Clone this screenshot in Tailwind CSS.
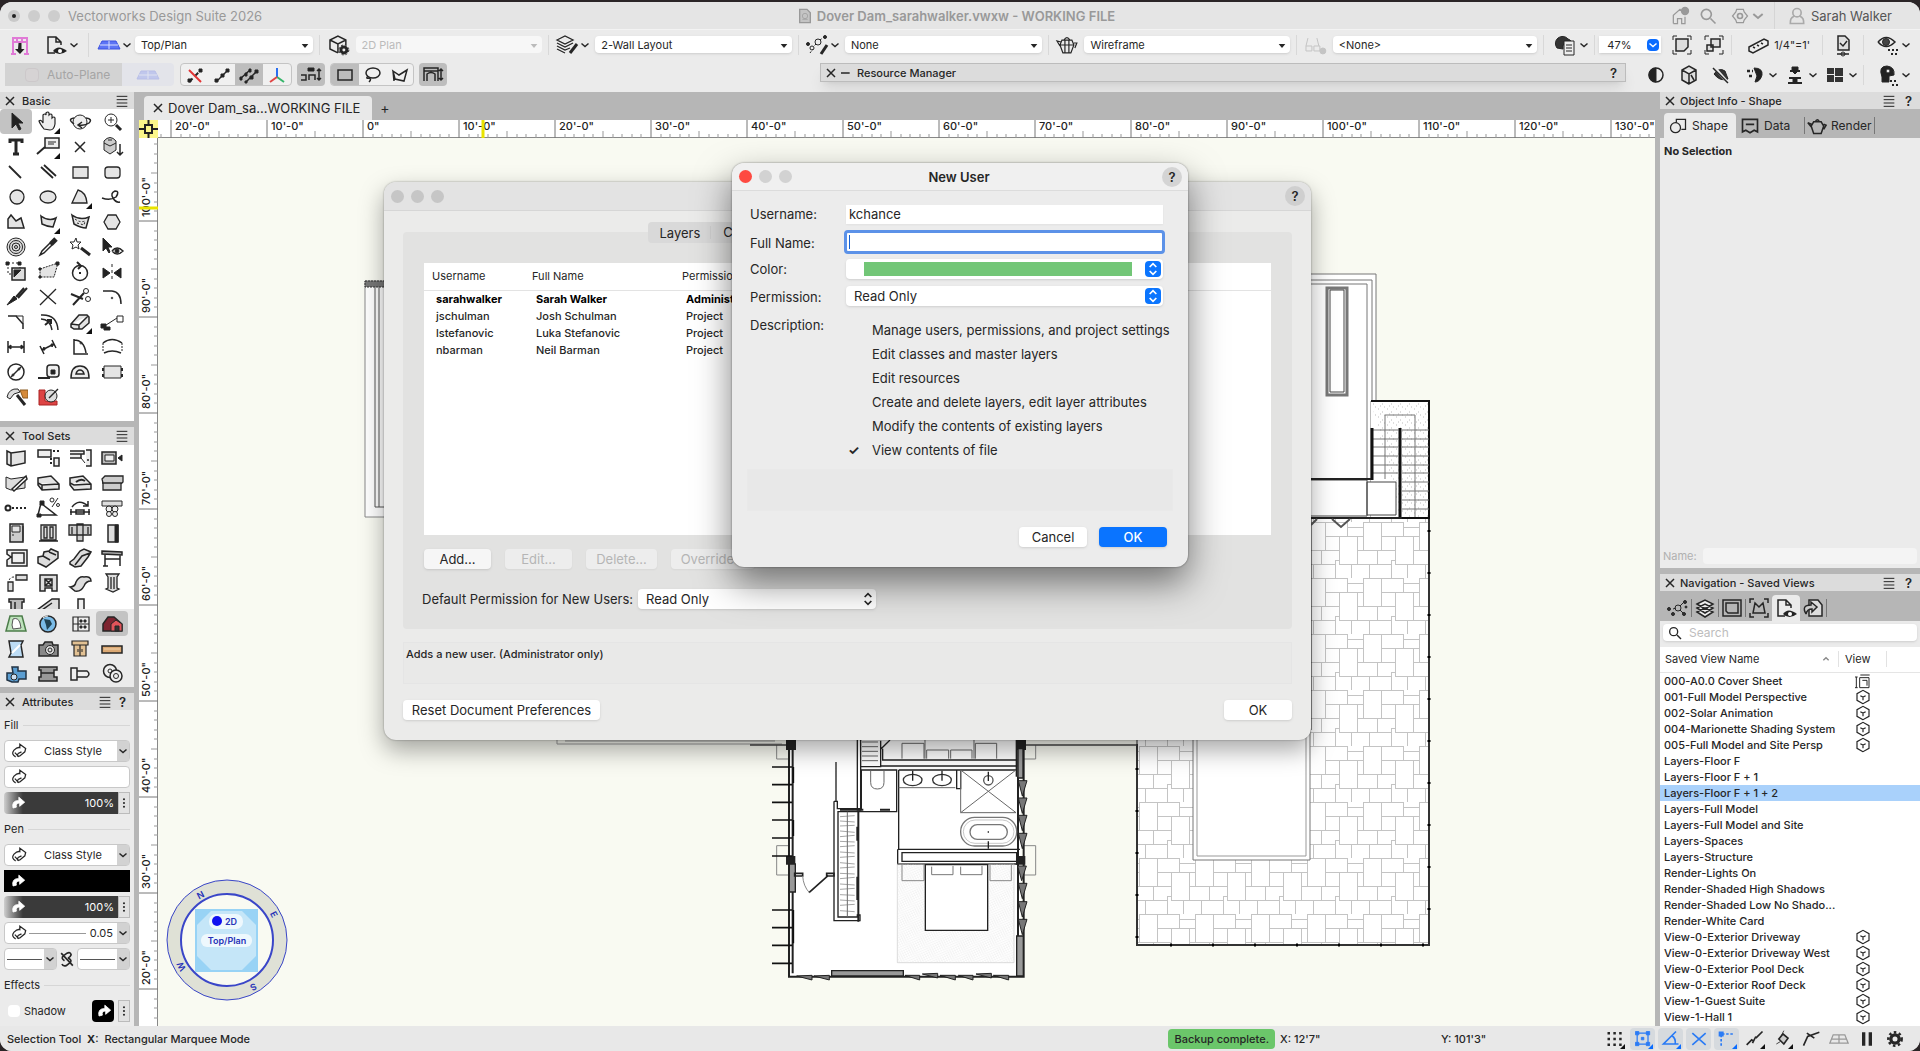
<!DOCTYPE html>
<html lang="en">
<head>
    <meta charset="UTF-8">
    <meta name="viewport" content="width=device-width, initial-scale=1.0">
    <title>Vectorworks Design Suite 2026</title>
    <script src="https://cdn.jsdelivr.net/npm/@tailwindcss/browser@4"></script>
</head>
<body class="h-screen overflow-hidden bg-[#2b2527] pt-[2px] font-[Inter,'Liberation_Sans',sans-serif] text-[11px] leading-4 text-[#262626]">
<div class="flex h-full flex-col overflow-hidden rounded-xl bg-[#ebebeb]">

    <!-- Title bar -->
    <header class="flex h-[27px] shrink-0 items-center bg-[#e5e5e5] pl-2 text-[13px] text-[#999]">
        <div class="flex flex-1 items-center gap-2">
            <span class="flex size-3 items-center justify-center rounded-full bg-[#c9c9c9]"><span class="size-1 rounded-full bg-[#222]"></span></span>
            <span class="size-3 rounded-full bg-[#cdcdcd]"></span>
            <span class="size-3 rounded-full bg-[#cdcdcd]"></span>
            <h1>Vectorworks Design Suite 2026</h1>
        </div>
        <div class="flex items-center gap-1 pr-4 font-semibold"><svg data-icon="file" class="size-4"></svg>Dover Dam_sarahwalker.vwxw - WORKING FILE</div>
        <div class="flex h-full flex-1 items-center justify-end">
            <button aria-label="Home" class="mr-2"><svg data-icon="home" class="size-5"></svg></button>
            <button aria-label="Search" class="mr-3"><svg data-icon="search" class="size-5"></svg></button>
            <button aria-label="Settings" class="mr-2 flex items-center"><svg data-icon="hexgear" class="size-5"></svg><svg data-icon="chev" class="size-4"></svg></button>
            <button class="flex h-full items-center gap-1 border-l border-[#d5d5d5] pr-7 pl-3 text-[#555]"><svg data-icon="person" class="size-5 text-[#aaa]"></svg>Sarah Walker</button>
        </div>
    </header>

    <!-- View bar -->
    <div class="flex h-[30px] shrink-0 items-center border-t border-[#f3f3f3] pr-2 pl-2">
        <button aria-label="Class import" class="mr-3"><svg data-icon="pinkdown" class="size-6"></svg></button>
        <button aria-label="Saved views" class="flex items-center border-r border-[#d8d8d8] pr-2"><svg data-icon="pageeye" class="size-6"></svg><svg data-icon="chev" class="size-3"></svg></button>
        <button aria-label="Planes" class="mr-[2px] ml-2 flex items-center"><svg data-icon="plane" class="size-6"></svg><svg data-icon="chev" class="size-3"></svg></button>
        <label class="relative grow basis-[179px]"><select aria-label="View" class="h-[17px] w-full appearance-none rounded-sm bg-white px-[6px] shadow-sm"><option>Top/Plan</option></select><svg data-icon="tri" class="pointer-events-none absolute top-[2px] right-0 size-4"></svg></label>
        <span class="ml-[6px] h-5 w-px bg-[#d8d8d8]"></span>
        <svg data-icon="cubegear" class="mx-[6px] size-6"></svg>
        <label class="relative grow basis-[188px] text-[#bbb]"><select aria-label="Projection" disabled class="h-[17px] w-full appearance-none rounded-sm bg-white/60 px-[6px]"><option>2D Plan</option></select><svg data-icon="tri" class="pointer-events-none absolute top-[2px] right-0 size-4"></svg></label>
        <span class="ml-[6px] h-5 w-px bg-[#d8d8d8]"></span>
        <button aria-label="Layers" class="mr-[4px] ml-[6px] flex items-center"><svg data-icon="layerspen" class="size-6"></svg><svg data-icon="chev" class="size-3"></svg></button>
        <label class="relative grow basis-[198px]"><select aria-label="Layer" class="h-[17px] w-full appearance-none rounded-sm bg-white px-[6px] shadow-sm"><option>2-Wall Layout</option></select><svg data-icon="tri" class="pointer-events-none absolute top-[2px] right-0 size-4"></svg></label>
        <span class="ml-[6px] h-5 w-px bg-[#d8d8d8]"></span>
        <button aria-label="Classes" class="mr-[4px] ml-[6px] flex items-center"><svg data-icon="classpen" class="size-6"></svg><svg data-icon="chev" class="size-3"></svg></button>
        <label class="relative grow basis-[198px]"><select aria-label="Class" class="h-[17px] w-full appearance-none rounded-sm bg-white px-[6px] shadow-sm"><option>None</option></select><svg data-icon="tri" class="pointer-events-none absolute top-[2px] right-0 size-4"></svg></label>
        <span class="ml-[6px] h-5 w-px bg-[#d8d8d8]"></span>
        <svg data-icon="teapot" class="mx-[6px] size-6"></svg>
        <label class="relative grow basis-[207px]"><select aria-label="Render mode" class="h-[17px] w-full appearance-none rounded-sm bg-white px-[6px] shadow-sm"><option>Wireframe</option></select><svg data-icon="tri" class="pointer-events-none absolute top-[2px] right-0 size-4"></svg></label>
        <span class="ml-[6px] h-5 w-px bg-[#d8d8d8]"></span>
        <svg data-icon="glasses" class="mx-[6px] size-6 text-[#c4c4c4]"></svg>
        <label class="relative grow basis-[206px]"><select aria-label="Data visualization" class="h-[17px] w-full appearance-none rounded-sm bg-white px-[6px] shadow-sm"><option>&lt;None&gt;</option></select><svg data-icon="tri" class="pointer-events-none absolute top-[2px] right-0 size-4"></svg></label>
        <span class="ml-[6px] h-5 w-px bg-[#d8d8d8]"></span>
        <button aria-label="Sheet" class="mr-[4px] ml-[10px] flex items-center"><svg data-icon="cloudpage" class="size-6"></svg><svg data-icon="chev" class="size-3"></svg></button>
        <span class="mr-1 h-5 w-px bg-[#d8d8d8]"></span>
        <label class="flex h-[17px] w-[62px] shrink-0 items-center bg-white shadow-sm"><input aria-label="Zoom" value="47%" class="w-12 pl-2"><span class="flex size-3 items-center justify-center rounded-sm bg-[#0a6cff] text-white"><svg data-icon="chev" class="size-3"></svg></span></label>
        <button aria-label="Fit page" class="ml-[9px]"><svg data-icon="fitpage" class="size-6"></svg></button>
        <button aria-label="Fit objects" class="mr-[5px] ml-[8px]"><svg data-icon="fitobj" class="size-6"></svg></button>
        <span class="h-5 w-px bg-[#d8d8d8]"></span>
        <button class="mr-3 ml-[14px] flex items-center gap-1"><svg data-icon="scale" class="size-6"></svg>1/4"=1'</button>
        <span class="h-5 w-px bg-[#d8d8d8]"></span>
        <button aria-label="Page check" class="mx-2"><svg data-icon="pagecheck" class="size-6"></svg></button>
        <span class="h-5 w-px bg-[#d8d8d8]"></span>
        <button aria-label="Visibility" class="ml-3 flex items-center"><svg data-icon="eyedots" class="size-6"></svg><svg data-icon="chev" class="size-3"></svg></button>
    </div>

    <!-- Mode bar with the docked Resource Manager -->
    <div class="flex h-[33px] shrink-0 items-center pr-2 pb-[2px] pl-[5px]">
        <div class="mr-[6px] flex h-[23px] items-center rounded bg-[#e3e4ea] text-[12px] text-[#a5a5a5]">
            <label class="flex h-full w-[117px] items-center gap-2 bg-[#d3d3d3] pl-5"><input type="checkbox" disabled class="size-[14px] appearance-none rounded-sm border border-[#ccc8ca] bg-[#d6d3d4]">Auto-Plane</label>
            <svg data-icon="plane" class="mx-[14px] size-6 opacity-25"></svg>
        </div>
        <div class="mr-[5px] flex h-[23px] overflow-hidden rounded border border-[#c4c4c4] bg-[#f0f0f0]">
            <button aria-label="Snap off" class="px-[2px]"><svg data-icon="snapoff" class="size-6"></svg></button>
            <button aria-label="Single" class="px-px"><svg data-icon="dots1" class="size-6"></svg></button>
            <button aria-label="Multiple" class="bg-[#bdbdbd] px-[2px]"><svg data-icon="dots3" class="size-6"></svg></button>
            <button aria-label="Axes" class="px-[2px]"><svg data-icon="axes" class="size-6"></svg></button>
        </div>
        <button aria-label="Wall insertion" class="mr-[5px] h-[23px] rounded bg-[#bdbdbd] px-[2px]"><svg data-icon="wallins" class="size-6"></svg></button>
        <div class="mr-[5px] flex h-[23px] overflow-hidden rounded border border-[#c4c4c4] bg-[#f0f0f0]">
            <button aria-label="Rectangle marquee" class="bg-[#bdbdbd] px-[2px]"><svg data-icon="marq" class="size-6"></svg></button>
            <button aria-label="Lasso marquee" class="px-[2px]"><svg data-icon="lasso" class="size-6"></svg></button>
            <button aria-label="Polygon marquee" class="px-px"><svg data-icon="polymarq" class="size-6"></svg></button>
        </div>
        <button aria-label="Door mode" class="h-[23px] rounded bg-[#bdbdbd] px-[2px]"><svg data-icon="doormode" class="size-6"></svg></button>
        <section class="mb-1 ml-auto flex h-[19px] w-[806px] items-center border border-[#bcbcbc] bg-[#dcdcdc] pr-2 pl-1 font-medium shadow-lg">
            <button aria-label="Close Resource Manager"><svg data-icon="x" class="size-3"></svg></button>
            <svg data-icon="minus" class="mr-1 size-4"></svg>
            <h2>Resource Manager</h2>
            <button aria-label="Resource Manager help" class="ml-auto text-[13px] font-semibold">?</button>
        </section>
        <button aria-label="Contrast" class="ml-[18px]"><svg data-icon="contrast" class="size-6"></svg></button>
        <button aria-label="Clip cube" class="ml-[9px]"><svg data-icon="cube" class="size-6"></svg></button>
        <button aria-label="Hidden" class="ml-[8px]"><svg data-icon="slash" class="size-6"></svg></button>
        <button aria-label="Gear view" class="ml-[10px] flex items-center"><svg data-icon="gearview" class="size-6"></svg><svg data-icon="chev" class="size-3"></svg></button>
        <button aria-label="Levels" class="ml-1 flex items-center"><svg data-icon="levels" class="size-6"></svg><svg data-icon="chev" class="size-3"></svg></button>
        <button aria-label="Panes" class="mx-1 flex items-center"><svg data-icon="panes" class="size-6"></svg><svg data-icon="chev" class="size-3"></svg></button>
        <span class="h-5 w-px bg-[#d8d8d8]"></span>
        <button aria-label="Quick preferences" class="ml-3 flex items-center"><svg data-icon="headgear" class="size-6"></svg><svg data-icon="chev" class="size-3"></svg></button>
    </div>

    <main class="flex min-h-0 flex-1 bg-[#b6b6b6]">
        <!-- Left palettes -->
        <aside class="flex w-[134px] shrink-0 flex-col">
            <section>
                <div class="flex h-[17px] items-center gap-[6px] bg-[#dcdcdc] px-1 font-medium">
                    <button aria-label="Close Basic"><svg data-icon="x" class="size-3"></svg></button><h2>Basic</h2>
                    <button aria-label="Basic menu" class="ml-auto"><svg data-icon="menu" class="size-4"></svg></button>
                </div>
                <div id="basicTools" class="grid h-[312px] auto-rows-[25px] grid-cols-[repeat(4,32px)] bg-white"></div>
            </section>
            <section class="mt-[6px]">
                <div class="flex h-[18px] items-center gap-[6px] bg-[#dcdcdc] px-1 font-medium">
                    <button aria-label="Close Tool Sets"><svg data-icon="x" class="size-3"></svg></button><h2>Tool Sets</h2>
                    <button aria-label="Tool Sets menu" class="ml-auto"><svg data-icon="menu" class="size-4"></svg></button>
                </div>
                <div id="setTools" class="grid h-[164px] auto-rows-[25px] grid-cols-[repeat(4,32px)] overflow-hidden bg-white"></div>
                <div id="toolSets" class="grid h-[78px] auto-rows-[25px] grid-cols-[repeat(4,32px)] bg-[#ebebeb] pt-[2px]"></div>
            </section>
            <section class="mt-[6px] flex-1 bg-[#ebebeb]">
                <div class="flex h-[17px] items-center gap-[6px] bg-[#dcdcdc] px-1 font-medium">
                    <button aria-label="Close Attributes"><svg data-icon="x" class="size-3"></svg></button><h2>Attributes</h2>
                    <button aria-label="Attributes menu" class="ml-auto"><svg data-icon="menu" class="size-4"></svg></button>
                    <button aria-label="Attributes help" class="mr-1 text-[13px] font-semibold">?</button>
                </div>
                <div class="px-1">
                    <h3 class="flex h-[30px] items-center gap-1">Fill<span class="h-px flex-1 bg-[#d6d6d6]"></span></h3>
                    <div class="flex flex-col gap-1">
                        <button class="flex h-[22px] items-center rounded-sm border border-[#c8c8c8] bg-white"><svg data-icon="swirl" class="ml-1 size-5"></svg><span class="flex-1 text-center">Class Style</span><span class="flex h-full w-3 items-center bg-[#d2d2d2]"><svg data-icon="chev" class="size-3"></svg></span></button>
                        <button aria-label="Fill color" class="flex h-[22px] items-center rounded-sm border border-[#c8c8c8] bg-white"><svg data-icon="swirl" class="ml-1 size-5"></svg></button>
                        <button class="flex h-[22px] items-center rounded-sm bg-linear-to-r from-[#cfcfcf] from-0% to-[#3a3a3a] to-15%"><svg data-icon="arrowfill" class="ml-1 size-5 text-white"></svg><span class="flex-1 pr-1 text-right text-white">100%</span><span class="flex h-full w-3 items-center border border-[#bbb] bg-[#e2e2e2]"><svg data-icon="vdots" class="size-3"></svg></span></button>
                    </div>
                    <h3 class="flex h-[30px] items-center gap-1">Pen<span class="h-px flex-1 bg-[#d6d6d6]"></span></h3>
                    <div class="flex flex-col gap-1">
                        <button class="flex h-[22px] items-center rounded-sm border border-[#c8c8c8] bg-white"><svg data-icon="swirl" class="ml-1 size-5"></svg><span class="flex-1 text-center">Class Style</span><span class="flex h-full w-3 items-center bg-[#d2d2d2]"><svg data-icon="chev" class="size-3"></svg></span></button>
                        <button aria-label="Pen color" class="flex h-[22px] items-center bg-black text-white"><svg data-icon="arrowfill" class="ml-1 size-5"></svg></button>
                        <button class="flex h-[22px] items-center rounded-sm bg-linear-to-r from-[#cfcfcf] from-0% to-[#3a3a3a] to-15%"><svg data-icon="arrowfill" class="ml-1 size-5 text-white"></svg><span class="flex-1 pr-1 text-right text-white">100%</span><span class="flex h-full w-3 items-center border border-[#bbb] bg-[#e2e2e2]"><svg data-icon="vdots" class="size-3"></svg></span></button>
                        <button class="flex h-[22px] items-center rounded-sm border border-[#c8c8c8] bg-white"><svg data-icon="swirl" class="ml-1 size-5"></svg><span class="h-px flex-1 bg-[#999]"></span><span class="px-1">0.05</span><span class="flex h-full w-3 items-center bg-[#d2d2d2]"><svg data-icon="chev" class="size-3"></svg></span></button>
                        <div class="flex h-[22px] items-center">
                            <button aria-label="Start marker" class="flex h-full flex-1 items-center rounded-sm border border-[#c8c8c8] bg-white"><span class="mx-[2px] h-px flex-1 bg-[#555]"></span><span class="flex h-full w-3 items-center bg-[#d2d2d2]"><svg data-icon="chev" class="size-3"></svg></span></button>
                            <svg data-icon="link" class="size-5"></svg>
                            <button aria-label="End marker" class="flex h-full flex-1 items-center rounded-sm border border-[#c8c8c8] bg-white"><span class="mx-[2px] h-px flex-1 bg-[#555]"></span><span class="flex h-full w-3 items-center bg-[#d2d2d2]"><svg data-icon="chev" class="size-3"></svg></span></button>
                        </div>
                    </div>
                    <h3 class="flex h-[30px] items-center gap-1">Effects<span class="h-px flex-1 bg-[#d6d6d6]"></span></h3>
                    <div class="flex h-[22px] items-center">
                        <label class="flex flex-1 items-center gap-1 pl-1"><input type="checkbox" class="size-3 appearance-none rounded-sm bg-white">Shadow</label>
                        <span class="mr-1 flex size-[22px] items-center justify-end rounded-sm bg-black text-white"><svg data-icon="arrowfill" class="size-5"></svg></span>
                        <button aria-label="Shadow options" class="flex h-full w-3 items-center border border-[#bbb] bg-[#e2e2e2]"><svg data-icon="vdots" class="size-3"></svg></button>
                    </div>
                </div>
            </section>
        </aside>

        <!-- Document -->
        <section class="relative ml-[5px] flex min-w-0 flex-1 flex-col">
            <div class="flex h-[28px] shrink-0 items-end pl-[5px]">
                <div class="flex h-6 items-center rounded-t bg-[#e9e9e9] pr-[12px] pl-2 text-[13px]"><button aria-label="Close file" class="mr-1"><svg data-icon="x" class="size-3"></svg></button>Dover Dam_sa...WORKING FILE</div>
                <button aria-label="New tab" class="px-2 pb-1 text-[14px]">+</button>
            </div>
            <div class="flex h-[18px] shrink-0 overflow-hidden bg-white">
                <svg class="h-[18px] w-[19px] shrink-0 bg-[#fbf68a]" viewBox="0 0 19 18" fill="none" stroke="#222" stroke-width="2"><path d="M6 5h7v8H6zM9.500 0v5M9.500 13v5M0 9h6M13 9h6"/></svg>
                <svg id="hRuler" class="h-[18px] flex-1 overflow-hidden"></svg>
            </div>
            <div class="flex min-h-0 flex-1 bg-[#f9faf2]">
                <svg id="vRuler" class="h-full w-[19px] shrink-0 bg-white"></svg>
                <div class="relative min-w-0 flex-1 overflow-hidden">
                    <svg id="plan" class="absolute top-0 left-0" width="1497" height="888" viewBox="158 138 1497 888" fill="none" stroke="#333">
                        <defs>
                            <pattern id="paving" width="56" height="56" patternUnits="userSpaceOnUse" patternTransform="translate(1139 746)">
                                <path fill="none" stroke="#c4c4c4" d="M0 .5h40M40 5.500h16M18 14.500h38M0 28.500h32M50 28.500h6M0 42.500h28M28 38.500h4M32 42.500h24M.5 0v28M18.500 0v28M40.500 0v14M32.500 14v28M50.500 14v28M14.500 28v14M6.500 42v14M28.500 38v18M44.500 42v14"/>
                            </pattern>
                            <pattern id="rug" width="7" height="7" patternUnits="userSpaceOnUse" patternTransform="rotate(-30)"><path stroke="#ddd" d="M3 0v5M6 3v4"/></pattern>
                            <pattern id="dots" width="9" height="8" patternUnits="userSpaceOnUse"><path stroke="#bbb" d="M1 1h1M5 4h1M7 7h1M3 6h1"/></pattern>
                        </defs>
                        <!-- west wing edge -->
                        <path fill="#fff" stroke="#888" d="M365 517V281h30v236z"/><path fill="#777" stroke="#333" stroke-dasharray="2 1" d="M365 281h20v6h-20z"/><path stroke="#555" d="M375 287v220h10M379 287v220"/><path stroke="#999" d="M557 740v4h225M565 741h210"/>
                        <!-- terrace -->
                        <path fill="#fff" stroke="#777" d="M1300 274h76v127h-5v117h-71z"/><path stroke="#777" d="M1300 280h72v121M1300 284h67v195"/>
                        <path stroke="#777" stroke-width="3" d="M1327 288h20v107h-20z"/><path fill="#fff" stroke="#444" d="M1330 290h14v102h-14z"/>
                        <path fill="#fff" stroke="none" d="M1137 739h174V518h118v427h-292z"/><path fill="url(#paving)" stroke="#222" d="M1137 730h174V518h118v427h-292V730"/>
                        <path stroke="#333" stroke-width="2" d="M1137 744v201h292V518"/>
                        <path stroke="#000" stroke-width="3" stroke-dasharray="2 40" d="M1137 768v177h292V518"/>
                        <path fill="#fff" stroke="#777" d="M1193 730h117v130h-117z"/><path stroke="#999" d="M1197 730v126h109V730"/>
                        <path fill="#fff" stroke="none" d="M1371 401h58v117h-58z"/><path fill="url(#dots)" stroke="#111" stroke-width="2" d="M1371 401h58v117h-29"/>
                        <path stroke="#777" d="M1402 430h27M1402 439h27M1402 447h27M1402 456h27M1402 465h27M1402 473h27M1402 482h27M1402 491h27M1402 500h27M1402 509h27M1372 430h26M1372 439h26M1372 447h26M1372 456h26M1372 465h26M1372 473h26M1385 479v-64h30v102"/>
                        <path stroke="#111" stroke-width="3" d="M1400 428v90M1372 428v52"/><path fill="#fff" stroke="#444" d="M1300 480h67v36h-67zM1367 482h29v33h-29z"/>
                        <path stroke="#222" stroke-width="2" d="M1300 479h71M1300 518h102"/><path stroke="#555" stroke-width="2" d="M1332 519l9 8 9-8M1311 525l6-6"/>
                        <!-- bedroom wing -->
                        <g transform="translate(750 720) scale(.333333)" stroke-width="4" stroke="#222">
                            <path fill="#fff" stroke="none" d="M120 40h692v730H120z"/>
                            <path stroke="#888" stroke-width="3" d="M80 75v42h40M80 377h40M80 377v88h38M857 75v42h-40M822 377h35v88h-35"/>
                            <path stroke="#444" d="M0 75h120M812 75h348"/>
                            <path stroke-width="6" d="M117 60v710h704V60M128 60v700M800 60v110M804 170v600"/>
                            <path fill="#222" d="M110 60h26v28h-26zM800 60h26v28h-26zM110 410h24v22h-24zM800 410h24v22h-24z"/>
                            <path stroke-width="5" stroke="#111" d="M66 141h60M66 194h60M66 247h60M66 300h60M66 354h60M66 408h60M66 570h60M66 623h60M66 676h60M66 730h60M130 141v48M130 300v48M130 570v100"/>
                            <path fill="#999" d="M118 432h18v84h-18zM804 86h15v88h-15zM800 648h20v120h-20zM245 752h215v16H245z"/>
                            <path fill="#777" stroke-width="3" d="M831 182l-14 46-12-46zM831 234l-14 46-12-46zM831 286l-14 46-12-46zM831 340l-14 46-12-46zM829 438l-14 44-12-44zM831 490l-14 46-12-46zM831 545l-14 46-12-46zM831 598l-14 46-12-46zM140 768l46 12v-14zM192 768l46 12v-14zM465 766l44 14v-14zM517 762l46 12v-14zM570 766l46 14v-14zM625 766l44 14v-14zM678 762l46 12v-14zM730 766l46 14v-14z"/>
                            <path d="M258 126v120M252 244v358h78V585h-8v6H264V275h176V150H334v120M252 244h10v22h70M322 60v210h10V60M332 140h60V62M392 88v50h408v-18H398V86M446 150v240M446 150h354M620 150v56h12v-56M392 88l28-28"/>
                            <path d="M446 388h364M443 388v44h360M456 398h344v26H456z"/>
                            <path stroke-width="6" d="M325 275v330M322 320v42M322 470v70M270 269h70M390 269h30"/>
                            <path stroke="#666" stroke-width="3" d="M362 152v35q0 20 20 20t20-20v-35M446 203h170M632 150v128h166M632 150l166 128M798 150L632 278M456 116V70h66v46M676 116V70h64v46M530 116V90h66v26M602 116V90h64v26M525 60v56M672 60v56M292 275v315M336 66h48M336 80h48M336 94h48M336 108h48M336 122h48"/>
                            <path stroke="#777" stroke-width="2" d="M270 290l44-3M270 303l44 3M270 318l44-2M270 333l44 4M270 350l44-4M270 364l44 2M270 380l44-3M270 396l44 3M270 412l44-3M270 428l44 4M270 444l44-3M270 460l44 2M270 476l44-4M270 492l44 3M270 508l44-3M270 524l44 2M270 540l44 3M270 556l44-3M270 572l44 3"/>
                            <ellipse cx="488" cy="180" rx="28" ry="17" stroke="#333"/><ellipse cx="576" cy="180" rx="28" ry="17" stroke="#333"/>
                            <path d="M488 152v30M576 152v30"/><circle cx="715" cy="181" r="14" stroke="#555"/><path d="M715 155v28"/>
                            <rect x="632" y="292" width="168" height="86" rx="42" stroke="#777"/><rect x="640" y="300" width="152" height="70" rx="35" stroke="#aaa" stroke-width="2"/><rect x="660" y="314" width="112" height="44" rx="22" stroke="#777"/><path d="M713 336h4M715 364v22"/>
                            <path fill="url(#rug)" stroke="#ccc" stroke-width="2" d="M442 432h350v296H442z"/>
                            <path stroke="#888" stroke-width="3" d="M456 434v48h66v-48M720 434v48h64v-48"/><path fill="#fff" d="M526 434h187v197H526z"/>
                            <path stroke="#777" stroke-width="3" d="M545 440v24h64v-26M632 440v24h64v-26"/>
                            <path d="M134 460h24v8h-24zM230 460h22v8h-22zM235 466l-58 52" stroke-width="5"/><path stroke="#888" stroke-width="3" d="M158 468q2 30 20 50"/>
                        </g>
                        <!-- view compass -->
                        <circle cx="227" cy="940" r="53" stroke="#dfe1d6" stroke-width="14"/><circle cx="227" cy="940" r="60" stroke="#3a46c8"/><circle cx="227" cy="940" r="46" stroke="#3a46c8" stroke-width="2"/>
                        <path fill="#98d3f5" stroke="none" d="M195 909h63v63h-63z"/><path fill="#c5e6f8" stroke="none" d="M211 911h31l14 14v31l-14 14h-31l-14-14v-31z"/>
                        <rect x="209" y="914" width="34" height="15" rx="7" fill="#eef8fd" stroke="none"/><rect x="201" y="934" width="51" height="13" rx="6" fill="#eef8fd" stroke="none"/>
                        <circle cx="217" cy="921" r="5" fill="#1010f0" stroke="none"/>
                        <g fill="#2733b8" stroke="none" font-size="9" font-weight="600" text-anchor="middle">
                            <text x="231" y="925">2D</text><text x="227" y="944">Top/Plan</text>
                            <text transform="translate(202 898) rotate(-28)">N</text><text transform="translate(271 916) rotate(62)">E</text>
                            <text transform="translate(252 984) rotate(152)">S</text><text transform="translate(184 965) rotate(-118)">W</text>
                        </g>
                    </svg>
                </div>
            </div>

            <!-- Document preferences dialog -->
            <div role="dialog" aria-label="Document preferences" class="absolute top-[90px] left-[245px] flex h-[558px] w-[927px] flex-col rounded-xl bg-[#ebebea] text-[13px] shadow-[0_10px_24px_rgba(0,0,0,0.35),0_0_2px_rgba(0,0,0,0.4)]">
                <div class="flex h-[29px] shrink-0 items-center gap-[7px] rounded-t-xl border-b border-[#d6d6d6] bg-[#e3e3e3] pr-[6px] pl-[7px]">
                    <span class="size-[13px] rounded-full bg-[#c6c6c6]"></span><span class="size-[13px] rounded-full bg-[#c6c6c6]"></span><span class="size-[13px] rounded-full bg-[#c6c6c6]"></span>
                    <button aria-label="Help" class="ml-auto size-5 rounded-full bg-[#cfcfcf] font-semibold">?</button>
                </div>
                <div class="flex flex-1 flex-col px-[19px] pt-[11px]">
                    <div class="z-10 -mb-[11px] flex h-[21px] w-[400px] shrink-0 self-center rounded bg-[#d9d9d9]">
                        <button class="pr-[10px] pl-[12px]">Layers</button><button class="my-1 border-l border-[#cfcfcf] pl-3 leading-[13px]">Classes</button>
                    </div>
                    <div class="h-[397px] shrink-0 rounded bg-[#e2e2e1] px-[21px] pt-[31px]">
                        <div class="h-[272px] bg-white">
                            <table class="w-full table-fixed text-left text-[11px] leading-[17px]">
                                <colgroup><col class="w-[106px]"><col class="w-[150px]"><col></colgroup>
                                <thead><tr class="h-[27px] border-b border-[#e3e3e3]"><th class="pl-2 font-normal">Username</th><th class="pl-[2px] font-normal">Full Name</th><th class="pl-[2px] font-normal">Permission</th></tr></thead>
                                <tbody id="userRows" class="font-medium"></tbody>
                            </table>
                        </div>
                        <div class="mt-[14px] flex gap-[14px]">
                            <button class="h-5 w-[67px] rounded bg-[#f6f6f6] shadow">Add...</button>
                            <button disabled class="h-5 w-[67px] rounded bg-[#ededed] text-[#b5b5b5] shadow-xs">Edit...</button>
                            <button disabled class="h-5 w-[71px] rounded bg-[#ededed] text-[#b5b5b5] shadow-xs">Delete...</button>
                            <button disabled class="h-5 w-[84px] rounded bg-[#ededed] text-[#b5b5b5] shadow-xs">Override...</button>
                        </div>
                        <div class="-ml-[2px] mt-[20px] flex items-center">
                            <label for="defaultPermission" class="w-[216px]">Default Permission for New Users:</label>
                            <div class="relative w-[238px]"><select id="defaultPermission" class="h-5 w-full appearance-none rounded bg-white px-2 shadow"><option>Read Only</option></select><svg data-icon="updown" class="pointer-events-none absolute top-[2px] right-0 size-4"></svg></div>
                        </div>
                    </div>
                    <p class="mt-[13px] h-[42px] border border-[#e5e5e5] bg-[#e9e9e8] px-[2px] py-[3px] text-[11px] font-medium">Adds a new user. (Administrator only)</p>
                    <div class="mt-[16px] flex justify-between">
                        <button class="h-5 w-[197px] rounded bg-white shadow">Reset Document Preferences</button>
                        <button class="h-5 w-[68px] rounded bg-white shadow">OK</button>
                    </div>
                </div>
            </div>

            <!-- New user dialog -->
            <form role="dialog" aria-label="New User" class="absolute top-[71px] left-[593px] z-20 flex h-[404px] w-[456px] flex-col rounded-xl bg-[#ececec] text-[13px] shadow-[0_16px_36px_rgba(0,0,0,0.5),0_0_2px_rgba(0,0,0,0.5)]">
                <div class="flex h-[28px] shrink-0 items-center gap-[7px] rounded-t-xl border-b border-[#dcdcdc] bg-[#f0f0f0] pr-[6px] pl-[7px]">
                    <span class="size-[13px] rounded-full bg-[#fe4a41]"></span><span class="size-[13px] rounded-full bg-[#d2d2d2]"></span><span class="size-[13px] rounded-full bg-[#d2d2d2]"></span>
                    <h2 class="flex-1 pr-9 text-center font-semibold">New User</h2>
                    <button type="button" aria-label="Help" class="size-5 rounded-full bg-[#d4d4d4] font-semibold">?</button>
                </div>
                <div class="grid grid-cols-[96px_317px] items-center px-[18px] pt-[13px]">
                    <label for="username" class="h-[20px] leading-5">Username:</label>
                    <input id="username" value="kchance" class="h-[19px] bg-white px-[3px] shadow-xs">
                    <label for="fullName" class="pt-2">Full Name:</label>
                    <div class="relative -mx-[2px] mt-[6px] h-[24px] rounded-sm border-3 border-[#5c92e8] bg-white"><input id="fullName" class="h-full w-full px-1 outline-none"><span class="absolute top-[2px] left-[2px] h-[14px] w-px bg-[#1560d0]"></span></div>
                    <label for="color" class="pt-1">Color:</label>
                    <button id="color" type="button" class="mt-[5px] flex h-[20px] items-center rounded bg-white pr-[2px] pl-[18px] shadow"><span class="h-[14px] w-[268px] bg-[#72c677]"></span><span class="ml-auto flex size-4 items-center justify-center rounded bg-[#0b75fe] text-white"><svg data-icon="updown" class="size-4"></svg></span></button>
                    <label for="permission" class="pt-2">Permission:</label>
                    <div class="relative mt-[7px] h-[20px]"><select id="permission" class="h-[20px] w-full appearance-none rounded bg-white px-2 shadow"><option>Read Only</option></select><span class="pointer-events-none absolute top-[2px] right-[2px] flex size-4 items-center justify-center rounded bg-[#0b75fe] text-white"><svg data-icon="updown" class="size-4"></svg></span></div>
                    <span class="self-start pt-[11px]">Description:</span>
                    <ul id="abilities" class="pt-[12px] leading-6"></ul>
                </div>
                <div class="mx-[15px] mt-[7px] h-[42px] border border-[#e9e9e9] bg-[#e8e8e8]"></div>
                <div class="mt-[16px] flex justify-end gap-3 pr-[21px]">
                    <button type="button" class="h-5 w-[68px] rounded bg-white shadow">Cancel</button>
                    <button type="button" class="h-5 w-[68px] rounded bg-[#0a74ff] font-medium text-white shadow">OK</button>
                </div>
            </form>
        </section>

        <!-- Right palettes -->
        <aside class="ml-[5px] flex w-[260px] shrink-0 flex-col">
            <section class="flex h-[476px] shrink-0 flex-col bg-[#ebebeb]">
                <div class="flex h-[17px] shrink-0 items-center gap-1 bg-[#dcdcdc] pr-2 pl-1 font-medium">
                    <button aria-label="Close Object Info"><svg data-icon="x" class="size-3"></svg></button><h2>Object Info - Shape</h2>
                    <button aria-label="Object Info menu" class="ml-auto mr-1"><svg data-icon="menu" class="size-4"></svg></button>
                    <button aria-label="Object Info help" class="text-[13px] font-semibold">?</button>
                </div>
                <nav class="flex h-[29px] shrink-0 items-end bg-[#b6b6b6] pl-1">
                    <a href="#shape" class="flex h-[25px] w-[72px] items-center gap-1 rounded-t bg-[#ebebeb] pl-1 text-[12px]"><svg data-icon="shape" class="size-5"></svg>Shape</a>
                    <a href="#data" class="flex h-[25px] w-[68px] items-center gap-1 pl-1 text-[12px]"><svg data-icon="data" class="size-5"></svg>Data</a>
                    <a href="#render" class="my-1 flex h-[17px] w-[71px] items-center gap-1 border-x border-[#777] pl-[2px] text-[12px]"><svg data-icon="pot" class="size-5 shrink-0"></svg>Render</a>
                </nav>
                <p class="flex-1 p-1 pt-[5px] font-bold">No Selection</p>
                <label class="mb-1 flex h-4 items-center gap-[6px] px-[3px] text-[#b0b0b0]">Name:<input disabled class="h-4 flex-1 rounded-sm bg-[#f4f4f4]"></label>
            </section>
            <section class="mt-[6px] flex min-h-0 flex-1 flex-col bg-white">
                <div class="flex h-[17px] shrink-0 items-center gap-1 bg-[#dcdcdc] pr-2 pl-1 font-medium">
                    <button aria-label="Close Navigation"><svg data-icon="x" class="size-3"></svg></button><h2>Navigation - Saved Views</h2>
                    <button aria-label="Navigation menu" class="ml-auto mr-1"><svg data-icon="menu" class="size-4"></svg></button>
                    <button aria-label="Navigation help" class="text-[13px] font-semibold">?</button>
                </div>
                <nav class="flex h-[30px] shrink-0 items-end bg-[#b6b6b6] pl-1">
                    <a href="#classes" aria-label="Classes" class="my-1 flex h-[18px] w-[28px] items-center justify-center border-r border-[#777]"><svg data-icon="classes" class="size-6"></svg></a>
                    <a href="#layers" aria-label="Design Layers" class="my-1 flex h-[18px] w-[27px] items-center justify-center border-r border-[#777]"><svg data-icon="layers" class="size-6"></svg></a>
                    <a href="#sheets" aria-label="Sheet Layers" class="my-1 flex h-[18px] w-[27px] items-center justify-center border-r border-[#777]"><svg data-icon="sheets" class="size-6"></svg></a>
                    <a href="#viewports" aria-label="Viewports" class="my-1 flex h-[18px] w-[26px] items-center justify-center"><svg data-icon="viewport" class="size-6"></svg></a>
                    <a href="#views" aria-label="Saved Views" class="flex h-[26px] w-[28px] items-center justify-center rounded-t bg-[#ebebeb]"><svg data-icon="pageeye" class="size-6"></svg></a>
                    <a href="#references" aria-label="References" class="my-1 flex h-[18px] w-[27px] items-center justify-center border-r border-[#777]"><svg data-icon="refs" class="size-6"></svg></a>
                </nav>
                <div class="h-[26px] shrink-0 bg-[#ebebeb] px-[3px] pt-[3px]">
                    <label class="flex h-[17px] items-center gap-[6px] rounded bg-white pl-1 shadow-sm"><svg data-icon="search" class="size-4"></svg><input placeholder="Search" class="flex-1 text-[12px] placeholder:text-[#bdbdbd]"></label>
                </div>
                <table class="w-full table-fixed text-left">
                    <colgroup><col class="w-[179px]"><col class="w-[48px]"><col></colgroup>
                    <thead><tr class="h-[25px] border-b border-[#e5e5e5]">
                        <th class="pl-[5px] font-normal"><span class="flex items-center justify-between border-r border-[#e2e2e2] pr-1">Saved View Name<svg data-icon="chevup" class="size-4 text-[#888]"></svg></span></th>
                        <th class="pl-[6px] font-normal"><span class="block border-r border-[#e2e2e2]">View</span></th><th></th>
                    </tr></thead>
                    <tbody id="viewRows" class="font-medium"></tbody>
                </table>
            </section>
        </aside>
    </main>

    <!-- Status bar -->
    <footer class="flex h-[25px] shrink-0 items-center bg-[#e8e8e8] pl-[7px] font-medium">
        <p class="flex-1">Selection Tool&nbsp; <b>X</b>:&nbsp; Rectangular Marquee Mode</p>
        <p class="rounded bg-[#6bc66a] px-[6px] py-[2px]">Backup complete.</p>
        <p class="w-[166px] pl-[5px]">X: 12'7"</p>
        <p class="w-[161px]">Y: 101'3"</p>
        <div id="snaps" class="flex w-[318px] items-center gap-[3px]"></div>
    </footer>
</div>

<script>
    const corner = '<path d="M24 18v6h-6z" fill="#111" stroke="none"/>';
    const blueCorner = '<path d="M24 18v6h-6z" fill="#0a6cff" stroke="none"/>';
    const icons = {
        x: '<path stroke-width="3" d="M4 4l16 16M20 4L4 20"/>',
        minus: '<path stroke-width="2.500" d="M6 12h13"/>',
        menu: '<path stroke-width="1.500" d="M4 5h16M4 10h16M4 15h16M4 20h16"/>',
        chev: '<path stroke-width="3" d="M5 9l7 6 7-6"/>',
        chevup: '<path stroke-width="2" d="M8 14l4-4 4 4"/>',
        tri: '<path fill="currentColor" stroke="none" d="M7 9h10l-5 6z"/>',
        updown: '<path stroke-width="2.500" d="M7 9l5-5 5 5M7 15l5 5 5-5"/>',
        vdots: '<g fill="currentColor" stroke="none"><circle cx="12" cy="3" r="2.500"/><circle cx="12" cy="12" r="2.500"/><circle cx="12" cy="21" r="2.500"/></g>',
        file: '<path fill="#c4c4c4" stroke-width="2" d="M4 2h11l5 5v15H4z"/><circle cx="12" cy="12" r="4"/><path d="M8 17h8"/>',
        home: '<path stroke-width="1.500" d="M4 21V11l8-7 4 4M4 21h5v-6h5v6h4v-8"/><circle cx="18" cy="6" r="5" fill="currentColor" stroke="none"/>',
        search: '<circle cx="10" cy="10" r="6" stroke-width="2"/><path stroke-width="2" d="M15 15l6 6"/>',
        hexgear: '<path stroke-width="1.500" d="M8 4h8l1 3 4 5-4 5-1 3H8l-1-3-4-5 4-5z"/><circle cx="12" cy="12" r="3" stroke-width="2"/>',
        person: '<circle cx="12" cy="8" r="5" stroke-width="2"/><path stroke-width="2" d="M9 12c-5 2-5 5-5 9h16c0-4 0-7-5-9"/>',
        pinkdown: '<path stroke="#e07ad6" stroke-width="2" d="M5 21V5h14v16M5 9h14M9 5v4M14 5v4M3 21h5M16 21h5"/><path fill="#222" stroke="none" d="M10.500 10h3v6h3L12 21l-5-5h3z"/>',
        pageeye: '<path stroke-width="1.500" d="M11 20H4V4h8l5 5v3M12 4v5h5"/><path fill="#222" stroke="none" d="M9 18q5-7 14 0-8 6-14 0"/><circle cx="16" cy="18" r="2" fill="#fff" stroke="none"/>',
        plane: '<path fill="#5d74f5" stroke="#3c51e0" d="M5 8h14l4 8H1z"/><path stroke="#dbe0ff" d="M12 8v8M3 12h18"/>',
        cubegear: '<path stroke-width="1.500" d="M12 20l-8-4V7l8-4 8 4v5M4 7l8 4 8-4M12 11v9"/><circle cx="18" cy="17" r="3" stroke-width="3"/><circle cx="18" cy="17" r="5" stroke-dasharray="2 2"/>',
        cube: '<path fill="#ddd" stroke-width="1.500" d="M12 21l-7-4V7l7-4 7 4v10zM5 7l7 4 7-4M12 11v10M14 12l3 5"/>',
        view3d: '<path d="M12 22l-9-5V7l9-5 9 5v10z" stroke-width="1.800"/><path stroke-width="1.800" d="M8 10l4 2 4-2M12 12v5"/>',
        view2d: '<path d="M8 3h14M2 6v16M0 6h4M0 22h4M7 7h14v15H7zM11 11h7v8" stroke-width="1.500"/>',
        layerspen: '<path stroke-width="1.300" d="M2 7l8-4 8 4-8 4zM2 10l8 4 8-4M2 13l8 4 5-2M2 16l8 4"/><path stroke-width="3" d="M22 11l-7 9"/>',
        classpen: '<circle cx="13" cy="9" r="3"/><circle cx="7" cy="15" r="2"/><circle cx="20" cy="4" r="1.500" fill="currentColor"/><circle cx="3" cy="11" r="1.500" fill="currentColor"/><path stroke-dasharray="2 2" d="M15 7l4-3M11 11l-3 3M5 20l3-4"/><path stroke-width="3" d="M22 12l-6 9"/>',
        teapot: '<path stroke-width="1.200" d="M8 20L5 12l2-5h10l2 5-3 8zM5 13L2 8l4 1M19 10l3 0-2 5M9 7q3-5 6 0M5 12h14M10 7v13M14 7v13"/>',
        pot: '<path stroke-width="1.800" d="M8 21L5 12l3-5h9l3 5-3 9zM6 14L1 8l5 2M20 10l3 1-3 5M10 7q2-5 5 0"/>',
        glasses: '<path d="M5 5l-2 8M14 5l2 8M3 13h6v5H3zM11 13h6v5h-6z"/><circle cx="20" cy="18" r="3" fill="currentColor"/>',
        cloudpage: '<path fill="#333" d="M3 15a6 6 0 1 1 11-9q4 1 3 6H9v4z"/><path fill="#eee" d="M10 8h10v14H10zM12 12h6M12 15h6M12 18h6"/>',
        fitpage: '<path d="M3 7V3h4M17 3h4v4M21 17v4h-4M7 21H3v-4"/><path fill="#ddd" stroke-width="1.500" d="M6 6h12v8l-4 4H6z"/>',
        fitobj: '<path d="M3 7V3h4M17 3h4v4M21 17v4h-4M7 21H3v-4"/><path fill="#ddd" stroke-width="1.500" d="M9 6h9v8H9zM5 12h6v6H5z"/>',
        scale: '<path fill="#eee" stroke-width="1.500" d="M3 14L18 6l4 2v4L7 20l-4-2zM7 14l2 1M11 12l2 1M15 10l2 1"/>',
        pagecheck: '<path fill="#ddd" stroke-width="1.500" d="M7 17V3h7l4 4v10zM9 10l3 3 4-5M6 21h12"/><circle cx="12" cy="21" r="2"/>',
        eyedots: '<path stroke-width="1.500" d="M2 9q8-9 17 0-9 9-17 0"/><circle cx="10" cy="9" r="3.500" fill="#444"/><path stroke-width="2" stroke-dasharray="2 2" d="M12 17h10M15 21h7"/>',
        snapoff: '<path stroke-width="2" stroke="#222" stroke-dasharray="5 3" d="M6 18L18 6"/><path stroke="#e23535" stroke-width="2" d="M6 6l12 12"/><path fill="#222" d="M5 15h3v3H5zM16 5h3v3h-3z"/>',
        dots1: '<path d="M6 18L18 6" stroke-width="1.500"/><path fill="#222" d="M5 15h3v3H5zM11 10h3v3h-3zM16 5h3v3h-3z"/>',
        dots3: '<path d="M3 15L13 6M9 18L20 7" stroke-width="1.500"/><path fill="#222" d="M3 13h2v3H3zM8 9h2v3H8zM12 5h2v3h-2zM8 17h2v2H8zM13 12h3v3h-3zM18 6h3v3h-3z"/>',
        axes: '<path stroke="#2a6ef0" stroke-width="2" d="M12 4v9"/><path stroke="#35b56a" stroke-width="2" d="M12 13l7 5"/><path stroke="#e04545" stroke-width="2" d="M12 13l-7 5"/>',
        wallins: '<path fill="#222" d="M9 5h6v3H9z"/><path stroke-width="1.500" d="M2 12h5v5H2M10 17v-5h6v5M20 6v11M18 8l2-2 2 2M18 15l2 2 2-2"/>',
        marq: '<path stroke-width="1.500" d="M5 6h14v10H5z"/>',
        lasso: '<ellipse cx="12" cy="9" rx="7" ry="5" stroke-width="1.500"/><path stroke-width="1.500" d="M7 12q-3 3 1 2 3 1 0 4"/>',
        polymarq: '<path stroke-width="1.500" d="M5 7l6 4 8-5-3 11-9-2zM5 7l1 10"/>',
        doormode: '<path stroke-width="1.500" d="M3 18V5h14v13M6 18v-7q4-3 8 0v7M3 8h14M20 6v11M18 8l2-2 2 2M18 15l2 2 2-2"/>',
        contrast: '<circle cx="12" cy="12" r="7" stroke-width="1.500"/><path fill="#222" d="M12 5a7 7 0 0 0 0 14z"/>',
        slash: '<path fill="#333" d="M5 11q5-7 11-3l3 8q-8 3-14-5"/><path stroke="#ebebeb" stroke-width="3" d="M5 4l14 16"/><path stroke-width="1.500" d="M4 5l15 15"/>',
        gearview: '<path fill="#222" d="M11 5q9 0 8 7-2 7-7 7l2-6z"/><path stroke-width="2.500" stroke-dasharray="3 2" d="M4 8h6M6 13h5"/>',
        levels: '<path stroke-width="2" d="M5 20h14M6 15h12M7 8h10"/><path fill="#222" d="M9 4h6v4l-3 3-3-3zM10 15h4v5h-4z"/>',
        panes: '<path fill="#333" stroke="none" d="M4 5h7v6H4zM12 5h8v8h-8zM4 12h7v7H4zM12 14h8v5h-8z"/>',
        headgear: '<path fill="#222" d="M6 19v-5q-4-11 5-11 8 1 7 9l-5 1v6z"/><circle cx="12" cy="8" r="2" fill="#eee"/><path stroke-width="2" stroke-dasharray="2 2" d="M14 18h8M16 22h6"/>',
        swirl: '<path stroke-width="1.500" d="M8 19q-6-3-2-8 4-4 7-3V4l7 5-1 4-6 5q-5 1-2-3l4-2M7 14l5 5"/>',
        arrowfill: '<path fill="currentColor" d="M6 18q-2-9 7-9V5l7 6-6 5v-4q-5 0-4 5z"/>',
        link: '<path stroke-width="2" d="M9 14q-5-3-1-6l4-3q4-2 5 2-1 3-4 4M14 11q5 3 1 6l-4 3q-4 1-5-2M5 5l14 15"/>',
        shape: '<path stroke-width="1.500" d="M10 8V4h11v12h-5"/><circle cx="9" cy="14" r="6" stroke-width="1.500"/>',
        data: '<path stroke-width="2" d="M3 4h18v15l-4-2-5 3-5-3-4 2zM7 10h10"/>',
        classes: '<circle cx="12" cy="12" r="3"/><path d="M7 13l3-1M14 10l4-4M14 14l3 3"/><g fill="#333"><circle cx="3" cy="13" r="1.500"/><circle cx="7" cy="18" r="1.500"/><circle cx="19" cy="6" r="1.500"/><circle cx="18" cy="18" r="1.500"/><circle cx="20" cy="11" r="1"/></g>',
        layers: '<path fill="#eee" stroke-width="1.500" d="M4 16l8-4 8 4-8 5zM4 12l8-4 8 4-8 5zM4 8l8-4 8 4-8 5z"/>',
        sheets: '<path stroke-width="1.500" d="M3 4h18v16H3zM6 7h12v10H8l-2-2z"/>',
        viewport: '<path stroke-width="1.500" d="M3 7V3h4M17 3h4v4M21 17v4h-4M7 21H3v-4M6 17l2-10 4 4 4-4 2 10z"/>',
        refs: '<path fill="#ddd" stroke-width="1.500" d="M8 4h9l4 5v11H8z"/><path fill="#ccc" stroke-width="1.500" d="M5 18q-5-9 5-9V6l6 5-5 5v-3q-5 0-6 5"/>',
        // basic palette
        arrow: '<path fill="#222" d="M8 3v15l4-4 3 6 2-1-3-6h5z"/>',
        hand: '<path fill="#eee" stroke-width="1.200" d="M8 19q-4-5-5-8 2-2 4 2V5q2-2 3 0V3q2-2 3 0v2q2-2 3 0v3q2-2 3 0v6q-1 6-5 6z"/>' + corner,
        flyover: '<circle cx="12" cy="12" r="7" fill="#eee"/><path stroke-width="1.500" d="M6 14q-7-5 0-6M18 8q7 1 3 5-4 3-10 2M14 12l-4 3 4 3"/>',
        zoom: '<circle cx="11" cy="10" r="6"/><path d="M8 10h6M11 7v6"/><path stroke-width="3" d="M16 15l5 5"/>',
        text: '<path stroke-width="3" d="M6 8V5h12v3M12 5v14M9 19h6"/>',
        callout: '<path fill="#eee" stroke-width="1.500" d="M9 3h14v10H9z"/><path d="M12 7h8M12 9h6"/><path stroke-width="2" d="M9 12l-8 7"/>' + corner,
        locus: '<path stroke-width="1.500" d="M7 7l10 10M17 7L7 17"/>',
        pushpull: '<path fill="#ccc" d="M4 6q6-7 12 0v9l-6 4-6-4z"/><path d="M4 8l6 3 6-3M8 5h4"/><path stroke-width="1.500" d="M20 9v11M17 17l3 3 3-3"/>',
        line: '<path stroke-width="1.800" d="M5 6l12 12"/>',
        dline: '<path stroke-width="1.800" d="M5 7l12 11M8 5l12 11"/>',
        rect: '<path fill="#e4e4e4" stroke-width="1.300" d="M5 7h15v11H5z"/>',
        rrect: '<rect x="5" y="7" width="15" height="11" rx="3" fill="#e4e4e4" stroke-width="1.300"/>',
        circle: '<circle cx="13" cy="12" r="7" fill="#e4e4e4" stroke-width="1.300"/>',
        oval: '<ellipse cx="12" cy="12" rx="8" ry="6" fill="#e4e4e4" stroke-width="1.300"/>',
        arc: '<path fill="#e4e4e4" stroke-width="1.300" d="M4 18L10 5q8 2 9 13z"/>' + corner,
        freehand: '<path stroke-width="1.500" d="M2 13q8 3 14-1 4-6-1-6-5 2-2 7 3 5 7 4"/>',
        poly: '<path fill="#e4e4e4" stroke-width="1.500" d="M4 18V9l3-4 5 6 5-3 3 10z"/>',
        spoly: '<path fill="#e4e4e4" stroke-width="1.500" d="M5 6q8 6 15 2l-3 9q-5 0-11-3z"/>' + corner,
        dpoly: '<path fill="#e4e4e4" stroke-width="1.500" d="M4 5q8 6 17 2l-3 11q-5 0-12-4z"/><path stroke-dasharray="2 2" d="M7 9q5 4 10 2l-1 4-7-2"/>',
        hex: '<path fill="#e4e4e4" stroke-width="1.300" d="M8 5h8l4 7-4 7H8l-4-7z"/>',
        spiral: '<g stroke-width="1"><circle cx="12" cy="12" r="9" fill="#ddd"/><circle cx="12" cy="12" r="6.500"/><circle cx="12" cy="12" r="4"/><circle cx="12" cy="12" r="1.500"/></g>',
        dropper: '<path stroke-width="1.500" d="M4 20l2-4 8-8 2 2-8 8z"/><path stroke-width="5" d="M15 9l5-5"/>',
        wand: '<path d="M8 3l1 4 4 0-3 3 1 4-3-2-4 2 1-4-3-3h4z"/><path stroke-width="3" d="M13 13l9 7"/>',
        selvis: '<path fill="#222" d="M3 3v13l3-3 3 5 1-1-2-5h4z"/><path stroke-width="1.500" fill="#fff" d="M12 16q5-6 11 0-6 6-11 0"/><circle cx="17" cy="16" r="2" fill="#222"/>',
        movept: '<path stroke-dasharray="2 2" d="M4 3h12v11H4z"/><path fill="#ddd" stroke-width="1.500" d="M8 8h13v12H8z"/><path fill="#222" d="M10 10h7l-7 7zM2 2h3v3H2zM14 2h3v3h-3z"/>',
        reshape: '<path fill="#e4e4e4" stroke-dasharray="2 1" d="M4 9l18-6-4 14H4z"/><path fill="#222" d="M3 8h2v2H3zM20 2h3v3h-3zM3 16h2v2H3z"/>',
        rotate: '<circle cx="12" cy="13" r="7.500" stroke-width="1.500"/><path stroke-width="2" d="M9 2l4 4-3 3M11 13h2"/>',
        mirror: '<path fill="#222" d="M3 8l7 5-7 5zM21 8l-7 5 7 5z"/><path stroke-dasharray="3 3" d="M12 4v17"/>',
        knife: '<path fill="#222" d="M3 20l7-9 3 3z"/><path stroke-width="2" d="M12 12l8-9M14 13l9-10"/>',
        trim: '<path stroke-width="1.300" d="M4 20L20 4M4 5l16 14"/>',
        scissors: '<path stroke-width="2" d="M3 9l12 5M5 20l11-12"/><circle cx="18" cy="6" r="2.500"/><circle cx="20" cy="14" r="2.500"/>',
        fillet: '<path stroke-width="1.500" d="M3 6h9q9 1 9 13"/><circle cx="12" cy="13" r=".8"/>',
        chamfer: '<path stroke-width="1.500" d="M4 6h8l7 8v5"/><path d="M12 6h7v8"/>',
        offset: '<path stroke-width="1.500" d="M5 5q16-1 17 15M5 9q9 0 11 11"/><path stroke-width="2" d="M9 15l6-5M15 14v-4h-4"/>',
        eraser: '<path fill="#e4e4e4" stroke-width="1.500" d="M3 14l8-9h8l2 2v6l-7 6H6l-3-2zM3 14l8 1 9-9M11 15v4"/>' + corner,
        connect: '<path d="M3 17l14-9"/><path fill="#222" d="M1 14h5v4H1zM4 17h6v3H4z"/><path d="M17 6h6v6h-6z"/>',
        dim: '<path stroke-width="1.500" d="M4 6v12M20 6v12M4 12h16"/><path fill="#222" d="M4 12l3-2v4zM20 12l-3-2v4z"/>',
        dimd: '<path stroke-width="1.500" d="M4 11l4 8M16 5l4 8M6 15l12-6"/><path fill="#222" d="M6 15l2-3 1 3zM18 9l-3 0 1 3z"/>',
        angle: '<path stroke-width="1.500" d="M6 4v15h14M6 5q10 0 12 13"/><circle cx="13" cy="8" r="1"/>',
        arcdim: '<path stroke-width="1.500" d="M3 8q9-7 19 0M4 18q8-4 17 0"/><path stroke-dasharray="2 1" d="M3 8v8M22 8v8"/>',
        diam: '<circle cx="12" cy="12" r="8" stroke-width="1.500"/><path stroke-width="1.500" d="M7 17L17 7"/><circle cx="9" cy="15" r="1"/><circle cx="15" cy="9" r="1"/>',
        tape: '<rect x="11" y="5" width="12" height="12" rx="3" stroke-width="1.500" fill="#eee"/><path fill="#222" d="M15 10h4v4h-4z"/><path stroke-width="2" d="M2 18h12"/>',
        protract: '<path fill="#eee" stroke-width="1.500" d="M3 18q0-12 9-12t9 12zM8 14q1-4 4-4t4 4z"/>',
        bounds: '<path fill="#e4e4e4" d="M4 6h17v12H4z"/><path stroke-width="2" d="M3 8v3M22 8v3M3 14v3M22 14v3"/>',
        hammer: '<path fill="#ddd" d="M3 12q2-9 11-8l2 3-6 2-4 5z"/><path stroke-width="3" d="M13 10l8 10"/><path fill="#d58a3a" stroke="#8a5a20" d="M16 5h8v8h-5z"/>',
        redtool: '<path fill="#d44" stroke="#a22" d="M3 5h6v11h12v4H3z"/><circle cx="15" cy="11" r="6" fill="#ddd"/><path stroke-width="1.500" d="M13 13l9-9"/>',
        // building tool set
        wall: '<path fill="#e4e4e4" stroke-width="1.500" d="M3 5l4 2 14-2v12L7 20l-4-2zM7 7v13"/>',
        wjoin: '<path fill="#eee" stroke-width="1.500" d="M2 4h13v7H2zM18 12h5v8h-5z"/><path stroke-width="2" stroke-dasharray="2 2" d="M17 5h6M15 12v6"/>',
        wcomp: '<path fill="#eee" stroke-width="1.500" d="M2 5h14v3H2M2 8h11v4H2M18 4h5v16h-5M19 14h2"/><path d="M13 12l4 5"/>',
        wend: '<path fill="#bbb" stroke-width="1.500" d="M2 6h14v12H2z"/><path fill="#eee" d="M5 9h9v6H5z"/><path fill="#222" d="M22 9v6l-4-3z"/>',
        wedit: '<path fill="#ddd" d="M2 6l5 2 14-2v11L7 19l-5-2z"/><path fill="#fff" stroke-width="1.500" d="M8 18L22 5l1 3-13 12z"/>',
        slab: '<path fill="#e4e4e4" stroke-width="1.500" d="M2 7l13-2 8 8v5l-17 1-4-5zM2 12l4 2 17-1M6 14v5"/>',
        slabd: '<path fill="#e4e4e4" stroke-width="1.500" d="M2 7l13-2 8 8v5l-17 1-4-5zM2 12l4 2 17-1"/><path stroke-width="2" d="M8 11q5-4 9-1"/>',
        roof: '<path fill="#ccc" stroke-width="1.300" d="M2 8l3-3 18 0v6l-2 2v6H3v-7zM2 12h20"/>',
        dotline: '<circle cx="4" cy="12" r="2.500" stroke-width="2"/><path stroke-width="2" stroke-dasharray="2 2" d="M8 12h15"/>',
        percent: '<path stroke-width="1.500" d="M5 7L2 19h18L6 8z"/><path fill="#222" d="M4 5h4v4H4zM1 18h4v3H1z"/><circle cx="16" cy="4" r="2"/><circle cx="22" cy="9" r="1.500"/><path d="M22 2l-6 9"/>',
        arcarrow: '<path stroke-width="1.500" d="M4 11q7-9 16-1M20 5v5h-5M2 16h20M8 14h8v4H8zM3 13v6M21 13v6"/>',
        truss: '<path fill="#ddd" d="M2 5h20v5H2z"/><g fill="#eee"><circle cx="9" cy="13" r="3"/><circle cx="15" cy="13" r="3"/><circle cx="9" cy="18" r="2.500"/><circle cx="15" cy="18" r="2.500"/></g>',
        door: '<path fill="#ccc" stroke-width="1.500" d="M6 3h13v18H6z"/><path fill="#e4e4e4" d="M8 5h8v6H8z"/><path d="M9 13v2M19 5v15"/>',
        window: '<path fill="#ddd" stroke-width="1.300" d="M5 4h15v15H5zM8 6h3v11H8zM14 6h3v11h-3zM3 20h19"/>',
        curtain: '<path fill="#ccc" stroke-width="1.300" d="M1 4h22v10H1zM9 3h6v17H9zM4 6v7M20 6v7"/>',
        column: '<path fill="#ddd" stroke-width="1.500" d="M8 4h10v17H8z"/><path fill="#222" d="M15 4h3v17h-3z"/>',
        space: '<path fill="#eee" stroke-width="1.500" d="M3 4h20v16H3v-6l4-3-4-3zM8 7h12v10H8z"/>',
        stair: '<path fill="#ddd" stroke-width="1.500" d="M2 11l5-1 1-4 5-1 2-2 7 3v6L10 21l-8-4zM7 10l7 4M13 6l7 3"/>',
        ramp: '<path fill="#ddd" stroke-width="1.500" d="M2 16l4-3 6-8 4-2 7 3-3 5-7 9-6 1-5-3zM7 19l7-9 8-3"/>',
        rail: '<path fill="#aaa" stroke-width="1.500" d="M2 5l20 1v3L2 8zM5 9v11M20 9v11M5 13h15M3 20h5"/>',
        mech: '<path fill="#ddd" stroke-width="1.300" d="M12 4h11v5H12zM4 11h5v9H4z"/><path stroke-dasharray="2 2" d="M10 6q-5 0-5 5"/>',
        elev: '<path fill="#ddd" stroke-width="1.500" d="M4 4h17v16h-5v-3H9v3H4zM9 8h7v7H9zM9 8l7 7M16 8l-7 7"/>',
        escal: '<path fill="#ddd" stroke-width="1.500" d="M2 16q5 0 6-5 3-6 8-5 7-1 7 4-5 0-7 5-3 6-9 5z"/>',
        pilaster: '<path fill="#ddd" stroke-width="1.300" d="M6 3h13l-2 3v11l2 1-6 3-7-3 2-1V6zM11 6v12M14 6v12"/>',
        part1: '<path fill="#bbb" stroke-width="1.500" d="M5 3h15v3h-2v16H7V6H5zM11 6v14"/>',
        part2: '<path fill="#ddd" stroke-width="1.500" d="M1 14L16 3h7v11M16 7L6 14"/>',
        part3: '<path fill="#eee" stroke-width="1.500" d="M10 3h6v19h-6z"/>',
        // sets
        site: '<path fill="#bfe3bd" stroke="#4c7d4a" stroke-width="1.500" d="M6 4h12l4 15H2z"/><path fill="#fff" stroke="#555" d="M9 7q5-2 7 4l1 5-8 1-1-4z"/>',
        globe: '<circle cx="12" cy="12" r="8" fill="#7bbce8" stroke-width="1.500"/><path fill="#245" stroke="none" d="M8 7l6 1 2 4-5 6-1-5z"/><path stroke="#fff" d="M7 6q2-2 5-2"/>',
        detail: '<path fill="#eee" stroke-width="1.200" d="M5 5h16v14H5zM10 5v14M5 12h16"/><path fill="#333" d="M12 8h2v2h-2zM16 8h2v2h-2zM12 14h2v2h-2zM16 14h2v2h-2z"/>',
        house: '<path fill="#7d2430" stroke-width="1.500" d="M3 12L8 5h6l8 7v7H3z"/><path fill="#e0545a" d="M11 12l5-4 6 4v7h-11z"/><path fill="#333" d="M15 14h4v5h-4z"/>',
        glass: '<path fill="#bcdcf5" stroke-width="1.500" d="M5 4h14l-2 4 2 12H5l2-4z"/><path stroke="#fff" stroke-width="2" d="M8 16l8-8"/>',
        camera: '<path fill="#888" stroke-width="1.500" d="M3 8h4l2-3h7l1 3h5v11H3z"/><circle cx="14" cy="13" r="4.500" fill="#ddd"/><circle cx="14" cy="13" r="2"/>',
        cabinet: '<path fill="#e2c193" stroke-width="1.200" d="M4 4h16v4H4zM6 8h12v11H6zM12 8v11"/><path stroke="#222" d="M10 12v3M14 12v3"/>',
        wood: '<path fill="#dba873" stroke-width="1.500" d="M2 9h20v7H2z"/><path stroke="#f2d4ae" d="M4 12h16"/>',
        pipe: '<path fill="#5b9ed2" stroke="#234" stroke-width="1.500" d="M8 5h6v4h8v8h-7l-1 3H8l-5-2v-7h6z"/><circle cx="10" cy="15" r="3" fill="#cde"/>',
        beam: '<path fill="#999" stroke-width="1.500" d="M3 5h18v3h-3v7h3v4H3v-4h2V8H3zM5 11h13"/>',
        bolt: '<path fill="#eee" stroke-width="1.500" d="M3 6h6v12H3zM9 9h10q4 3 0 6H9z"/>',
        gears: '<circle cx="10" cy="9" r="6.500" fill="#eee" stroke-width="1.500"/><circle cx="10" cy="9" r="2"/><circle cx="16" cy="14" r="6" fill="#eee" stroke-width="1.500"/><circle cx="16" cy="14" r="2.500"/>',
        // snaps
        grid: '<path stroke-width="3" stroke-dasharray="3 4" d="M3 5h17M3 12h17M3 19h17"/>' + corner,
        objsnap: '<g stroke="#2a7bf5"><path stroke-width="1.500" d="M5 5h13v13H5z"/><path fill="#2a7bf5" d="M3 3h4v4H3zM16 3h4v4h-4zM3 16h4v4H3zM16 16h4v4h-4zM10 10h3v3h-3z"/></g>' + blueCorner,
        anglesnap: '<path stroke="#2a7bf5" stroke-width="2" d="M18 3L3 18h18M13 8q5 3 4 10"/>' + blueCorner,
        xsnap: '<path stroke="#2a7bf5" stroke-width="2" d="M4 5l16 14M20 5L4 19"/>',
        smart: '<path stroke="#2a7bf5" stroke-width="2" stroke-dasharray="3 2" d="M5 20V6h16"/><path fill="#2a7bf5" stroke="none" d="M2 3h6v6H2z"/>' + blueCorner,
        dist: '<path stroke-width="2" d="M2 19l6-6 3 2M13 11l8-8M9 17l4-8"/>' + corner,
        tang: '<path stroke-width="2" fill="#ccc" d="M7 12l5-6 6 5-5 7z"/><path d="M13 2l-3 6M4 18l5-3"/>' + corner,
        edge: '<path stroke-width="2" d="M3 20l5-11 14-5M7 5l9 6"/>',
        work: '<path stroke="#999" stroke-width="1.500" d="M5 7h14l4 10H1zM12 7v10M3 12h18"/>',
        pause: '<path stroke-width="4" d="M8 4v16M16 4v16"/>',
        cog: '<circle cx="12" cy="12" r="5" stroke-width="4"/><circle cx="12" cy="12" r="8" stroke-width="3" stroke-dasharray="3 3"/>'
    };

    function paint(svg) {
        svg.setAttribute('viewBox', '0 0 24 24');
        svg.setAttribute('fill', 'none');
        svg.setAttribute('stroke', 'currentColor');
        svg.innerHTML = icons[svg.dataset.icon];
    }

    const basicTools = ['arrow', 'hand', 'flyover', 'zoom', 'text', 'callout', 'locus', 'pushpull', 'line', 'dline', 'rect', 'rrect', 'circle', 'oval', 'arc', 'freehand', 'poly', 'spoly', 'dpoly', 'hex', 'spiral', 'dropper', 'wand', 'selvis', 'movept', 'reshape', 'rotate', 'mirror', 'knife', 'trim', 'scissors', 'fillet', 'chamfer', 'offset', 'eraser', 'connect', 'dim', 'dimd', 'angle', 'arcdim', 'diam', 'tape', 'protract', 'bounds', 'hammer', 'redtool'];
    const setTools = ['wall', 'wjoin', 'wcomp', 'wend', 'wedit', 'slab', 'slabd', 'roof', 'dotline', 'percent', 'arcarrow', 'truss', 'door', 'window', 'curtain', 'column', 'space', 'stair', 'ramp', 'rail', 'mech', 'elev', 'escal', 'pilaster', 'part1', 'part2', 'part3'];
    const toolSets = ['site', 'globe', 'detail', 'house', 'glass', 'camera', 'cabinet', 'wood', 'pipe', 'beam', 'bolt', 'gears'];
    const snaps = ['grid', 'objsnap', 'anglesnap', 'xsnap', 'smart', 'dist', 'tang', 'edge', 'work', 'pause', 'cog'];

    function fillTools(id, names, active) {
        document.getElementById(id).innerHTML = names.map(name => `
            <button aria-label="${name}" class="flex items-center justify-center rounded ${active.includes(name) ? 'bg-[#c3c3c3]' : ''}">
                <svg data-icon="${name}" class="size-6"></svg>
            </button>`).join('');
    }
    fillTools('basicTools', basicTools, ['arrow']);
    fillTools('setTools', setTools, []);
    fillTools('toolSets', toolSets, ['house']);

    document.getElementById('snaps').innerHTML = snaps.map(name => `
        <button aria-label="${name}" class="flex h-[22px] w-[25px] items-center justify-center rounded ${['objsnap', 'anglesnap', 'xsnap', 'smart'].includes(name) ? 'bg-[#d6dade]' : ''}">
            <svg data-icon="${name}" class="size-5"></svg>
        </button>`).join('');

    const users = [
        ['sarahwalker', 'Sarah Walker', 'Administrator'],
        ['jschulman', 'Josh Schulman', 'Project'],
        ['lstefanovic', 'Luka Stefanovic', 'Project'],
        ['nbarman', 'Neil Barman', 'Project']
    ];
    document.getElementById('userRows').innerHTML = users.map((u, i) => `
        <tr class="${i === 0 ? 'font-bold text-black' : ''}"><td class="pl-3">${u[0]}</td><td class="pl-[6px]">${u[1]}</td><td class="pl-[6px]">${u[2]}</td></tr>`).join('');

    const abilities = ['Manage users, permissions, and project settings', 'Edit classes and master layers', 'Edit resources', 'Create and delete layers, edit layer attributes', 'Modify the contents of existing layers', 'View contents of file'];
    document.getElementById('abilities').innerHTML = abilities.map((a, i) => `
        <li class="flex whitespace-nowrap"><span class="w-[26px] shrink-0 pl-[2px] font-bold">${i === 5 ? '✓' : ''}</span>${a}</li>`).join('');

    const views = [
        ['000-A0.0 Cover Sheet', 'view2d'], ['001-Full Model Perspective', 'view3d'], ['002-Solar Animation', 'view3d'],
        ['004-Marionette Shading System', 'view3d'], ['005-Full Model and Site Persp', 'view3d'], ['Layers-Floor F'],
        ['Layers-Floor F + 1'], ['Layers-Floor F + 1 + 2'], ['Layers-Full Model'], ['Layers-Full Model and Site'],
        ['Layers-Spaces'], ['Layers-Structure'], ['Render-Lights On'], ['Render-Shaded High Shadows'],
        ['Render-Shaded Low No Shado...'], ['Render-White Card'], ['View-0-Exterior Driveway', 'view3d'],
        ['View-0-Exterior Driveway West', 'view3d'], ['View-0-Exterior Pool Deck', 'view3d'],
        ['View-0-Exterior Roof Deck', 'view3d'], ['View-1-Guest Suite', 'view3d'], ['View-1-Hall 1', 'view3d']
    ];
    document.getElementById('viewRows').innerHTML = views.map(([name, icon]) => `
        <tr class="h-4 ${name === 'Layers-Floor F + 1 + 2' ? 'bg-[#a9d1fb]' : ''}">
            <td class="pl-1 whitespace-nowrap">${name}</td>
            <td class="pl-4">${icon ? `<svg data-icon="${icon}" class="size-4"></svg>` : ''}</td><td></td>
        </tr>`).join('');

    // Rulers: a labelled mark each 10 feet (96 px), a tick per foot
    let h = '<path stroke="#888" d="M0 17.500h3000"/>';
    for (let i = -1; i < 16; i++) {
        const x = 13 + i * 96;
        for (let t = 1; t < 10; t++) h += `<path stroke="#999" d="M${x + Math.round(t * 9.6)} ${t === 5 ? 11 : 14}v6"/>`;
        const feet = Math.abs((i - 2) * 10);
        h += `<path stroke="#777" d="M${x} 0v18"/><text x="${x + 4}" y="10" font-size="11" font-weight="500" fill="#222">${feet ? feet + "'-0" : 0}"</text>`;
    }
    h += '<path stroke="#e9e400" stroke-width="3" d="M325 0v18"/>';
    document.getElementById('hRuler').innerHTML = h;

    let v = '<path stroke="#888" d="M18.500 0v3000"/>';
    for (let i = -1; i < 10; i++) {
        const y = 83 + i * 96;
        for (let t = 1; t < 10; t++) v += `<path stroke="#999" d="M${t === 5 ? 12 : 15} ${y + Math.round(t * 9.6)}h6"/>`;
        v += `<path stroke="#777" d="M0 ${y}h19"/>`;
        if (i >= 0 && i < 9) v += `<text transform="translate(11 ${y - 4}) rotate(-90)" font-size="11" font-weight="500" fill="#222">${100 - i * 10}'-0"</text>`;
    }
    v += '<path stroke="#e9e400" stroke-width="3" d="M0 70h19"/>';
    document.getElementById('vRuler').innerHTML = v;

    document.querySelectorAll('svg[data-icon]').forEach(paint);
</script>
</body>
</html>
